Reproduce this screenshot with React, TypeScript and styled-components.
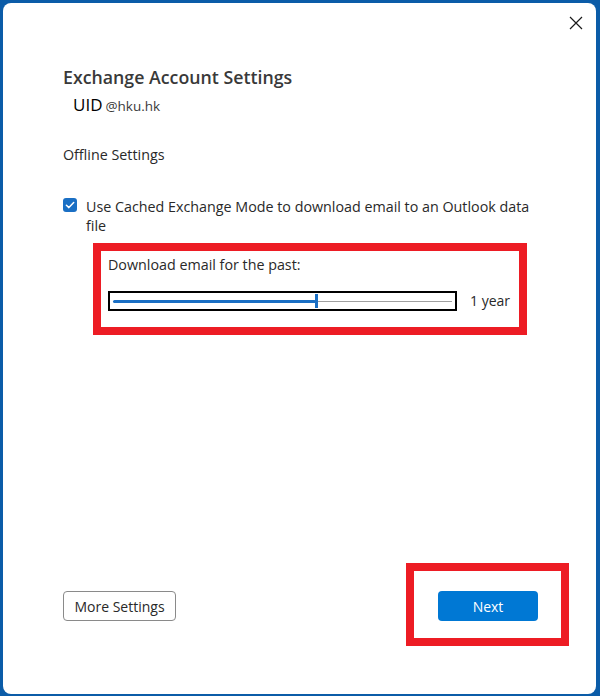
import { FunctionComponent } from "react";
import styled, { createGlobalStyle } from "styled-components";

const GlobalStyle = createGlobalStyle`
  html, body {
    margin: 0;
    padding: 0;
    background: #0b5ca8;
  }
  body {
    font-family: "Open Sans", "Noto Sans", sans-serif;
    color: #292929;
  }
`;

const Checkmark: FunctionComponent = () => (
  <svg width="14" height="14" viewBox="0 0 14 14">
    <rect x="0" y="0" width="14" height="14" rx="3" fill="#1a6fc4" />
    <path d="M3.4 7.2 L5.9 9.6 L10.7 4.6" fill="none" stroke="#fff" strokeWidth="1.5" strokeLinecap="round" strokeLinejoin="round" />
  </svg>
);

const CloseIcon: FunctionComponent = () => (
  <svg width="14" height="14" viewBox="0 0 14 14">
    <path d="M1 1 L13 13 M13 1 L1 13" stroke="#1a1a1a" strokeWidth="1.2" fill="none" />
  </svg>
);

export default function App() {
  const months = 12;
  const maxMonths = 20;
  const fill = (months / maxMonths) * 100;

  return (
    <>
      <GlobalStyle />
      <Dialog>
        <Header>
          <CloseButton aria-label="Close">
            <CloseIcon />
          </CloseButton>
        </Header>
        <Body>
          <Title>Exchange Account Settings</Title>
          <Account>
            <Uid>UID</Uid>
            <Domain>@hku.hk</Domain>
          </Account>
          <SectionLabel>Offline Settings</SectionLabel>
          <CheckRow>
            <CheckBox>
              <Checkmark />
            </CheckBox>
            <CheckText>Use Cached Exchange Mode to download email to an Outlook data file</CheckText>
          </CheckRow>
          <Highlight>
            <FieldLabel>Download email for the past:</FieldLabel>
            <SliderRow>
              <SliderFrame>
                <Track>
                  <TrackFill style={{ width: `${fill}%` }} />
                  <Thumb style={{ left: `${fill}%` }} />
                </Track>
              </SliderFrame>
              <SliderValue>1 year</SliderValue>
            </SliderRow>
          </Highlight>
        </Body>
        <Footer>
          <SecondaryButton>More Settings</SecondaryButton>
          <ButtonHighlight>
            <PrimaryButton>Next</PrimaryButton>
          </ButtonHighlight>
        </Footer>
      </Dialog>
    </>
  );
}

const Dialog = styled.div`
  box-sizing: border-box;
  margin: 3px 4px 2px 3px;
  height: 691px;
  background: #fff;
  border-radius: 8px;
  display: flex;
  flex-direction: column;
`;

const Header = styled.div`
  display: flex;
  justify-content: flex-end;
  padding: 13px 13px 0 0;
`;

const CloseButton = styled.button`
  border: none;
  background: none;
  padding: 0;
  width: 14px;
  height: 14px;
  display: flex;
  cursor: pointer;
`;

const Body = styled.div`
  display: flex;
  flex-direction: column;
  align-items: flex-start;
  padding-left: 60px;
`;

const Title = styled.h1`
  margin: 35px 0 0;
  font-size: 17.75px;
  line-height: 24px;
  font-weight: 600;
  color: #393939;
`;

const Account = styled.div`
  display: flex;
  align-items: baseline;
  gap: 3px;
  margin: 4px 0 0 10px;
  height: 20px;
`;

const Uid = styled.span`
  font-size: 17px;
  font-weight: 400;
  color: #000;
`;

const Domain = styled.span`
  font-size: 13.5px;
  color: #3a3a3a;
`;

const SectionLabel = styled.div`
  margin-top: 32px;
  font-size: 14.3px;
  line-height: 20px;
`;

const CheckRow = styled.label`
  display: flex;
  align-items: flex-start;
  gap: 9px;
  margin-top: 32px;
  width: 472px;
`;

const CheckBox = styled.span`
  display: flex;
  margin-top: 1px;
`;

const CheckText = styled.span`
  font-size: 14.3px;
  line-height: 19px;
`;

const Highlight = styled.div`
  box-sizing: border-box;
  margin: 8px 0 0 30px;
  width: 434px;
  border: 8px solid #ed1c24;
  padding: 4px 7px 16px;
`;

const FieldLabel = styled.div`
  font-size: 14.3px;
  line-height: 20px;
`;

const SliderRow = styled.div`
  display: flex;
  align-items: center;
  gap: 13px;
  margin-top: 16px;
`;

const SliderFrame = styled.div`
  box-sizing: border-box;
  width: 349px;
  height: 20px;
  border: 2px solid #000;
  padding: 0 3px;
  display: flex;
  align-items: center;
`;

const Track = styled.div`
  position: relative;
  flex: 1;
  height: 1px;
  background: #a0a0a0;
`;

const TrackFill = styled.div`
  position: absolute;
  left: 0;
  top: -1px;
  height: 3px;
  border-radius: 2px;
  background: #1a6fc4;
`;

const Thumb = styled.div`
  position: absolute;
  top: -7px;
  width: 3px;
  height: 14px;
  margin-left: -1px;
  background: #1a6fc4;
`;

const SliderValue = styled.span`
  font-size: 14px;
  line-height: 20px;
`;

const Footer = styled.div`
  margin-top: auto;
  display: flex;
  align-items: flex-start;
  justify-content: space-between;
  padding: 0 27px 48px 60px;
`;

const SecondaryButton = styled.button`
  box-sizing: border-box;
  margin-top: 28px;
  height: 30px;
  width: 113px;
  border: 1px solid #8a8a8a;
  border-radius: 4px;
  background: #fff;
  font-family: "Open Sans", "Noto Sans", sans-serif;
  font-size: 14px;
  color: #292929;
  padding: 0;
`;

const ButtonHighlight = styled.div`
  border: 8px solid #ed1c24;
  padding: 20px 23px 17px 24px;
`;

const PrimaryButton = styled.button`
  display: block;
  width: 100px;
  height: 30px;
  border: none;
  border-radius: 4px;
  background: #0078d4;
  color: #fff;
  font-family: "Open Sans", "Noto Sans", sans-serif;
  font-size: 14px;
  padding: 0;
`;
